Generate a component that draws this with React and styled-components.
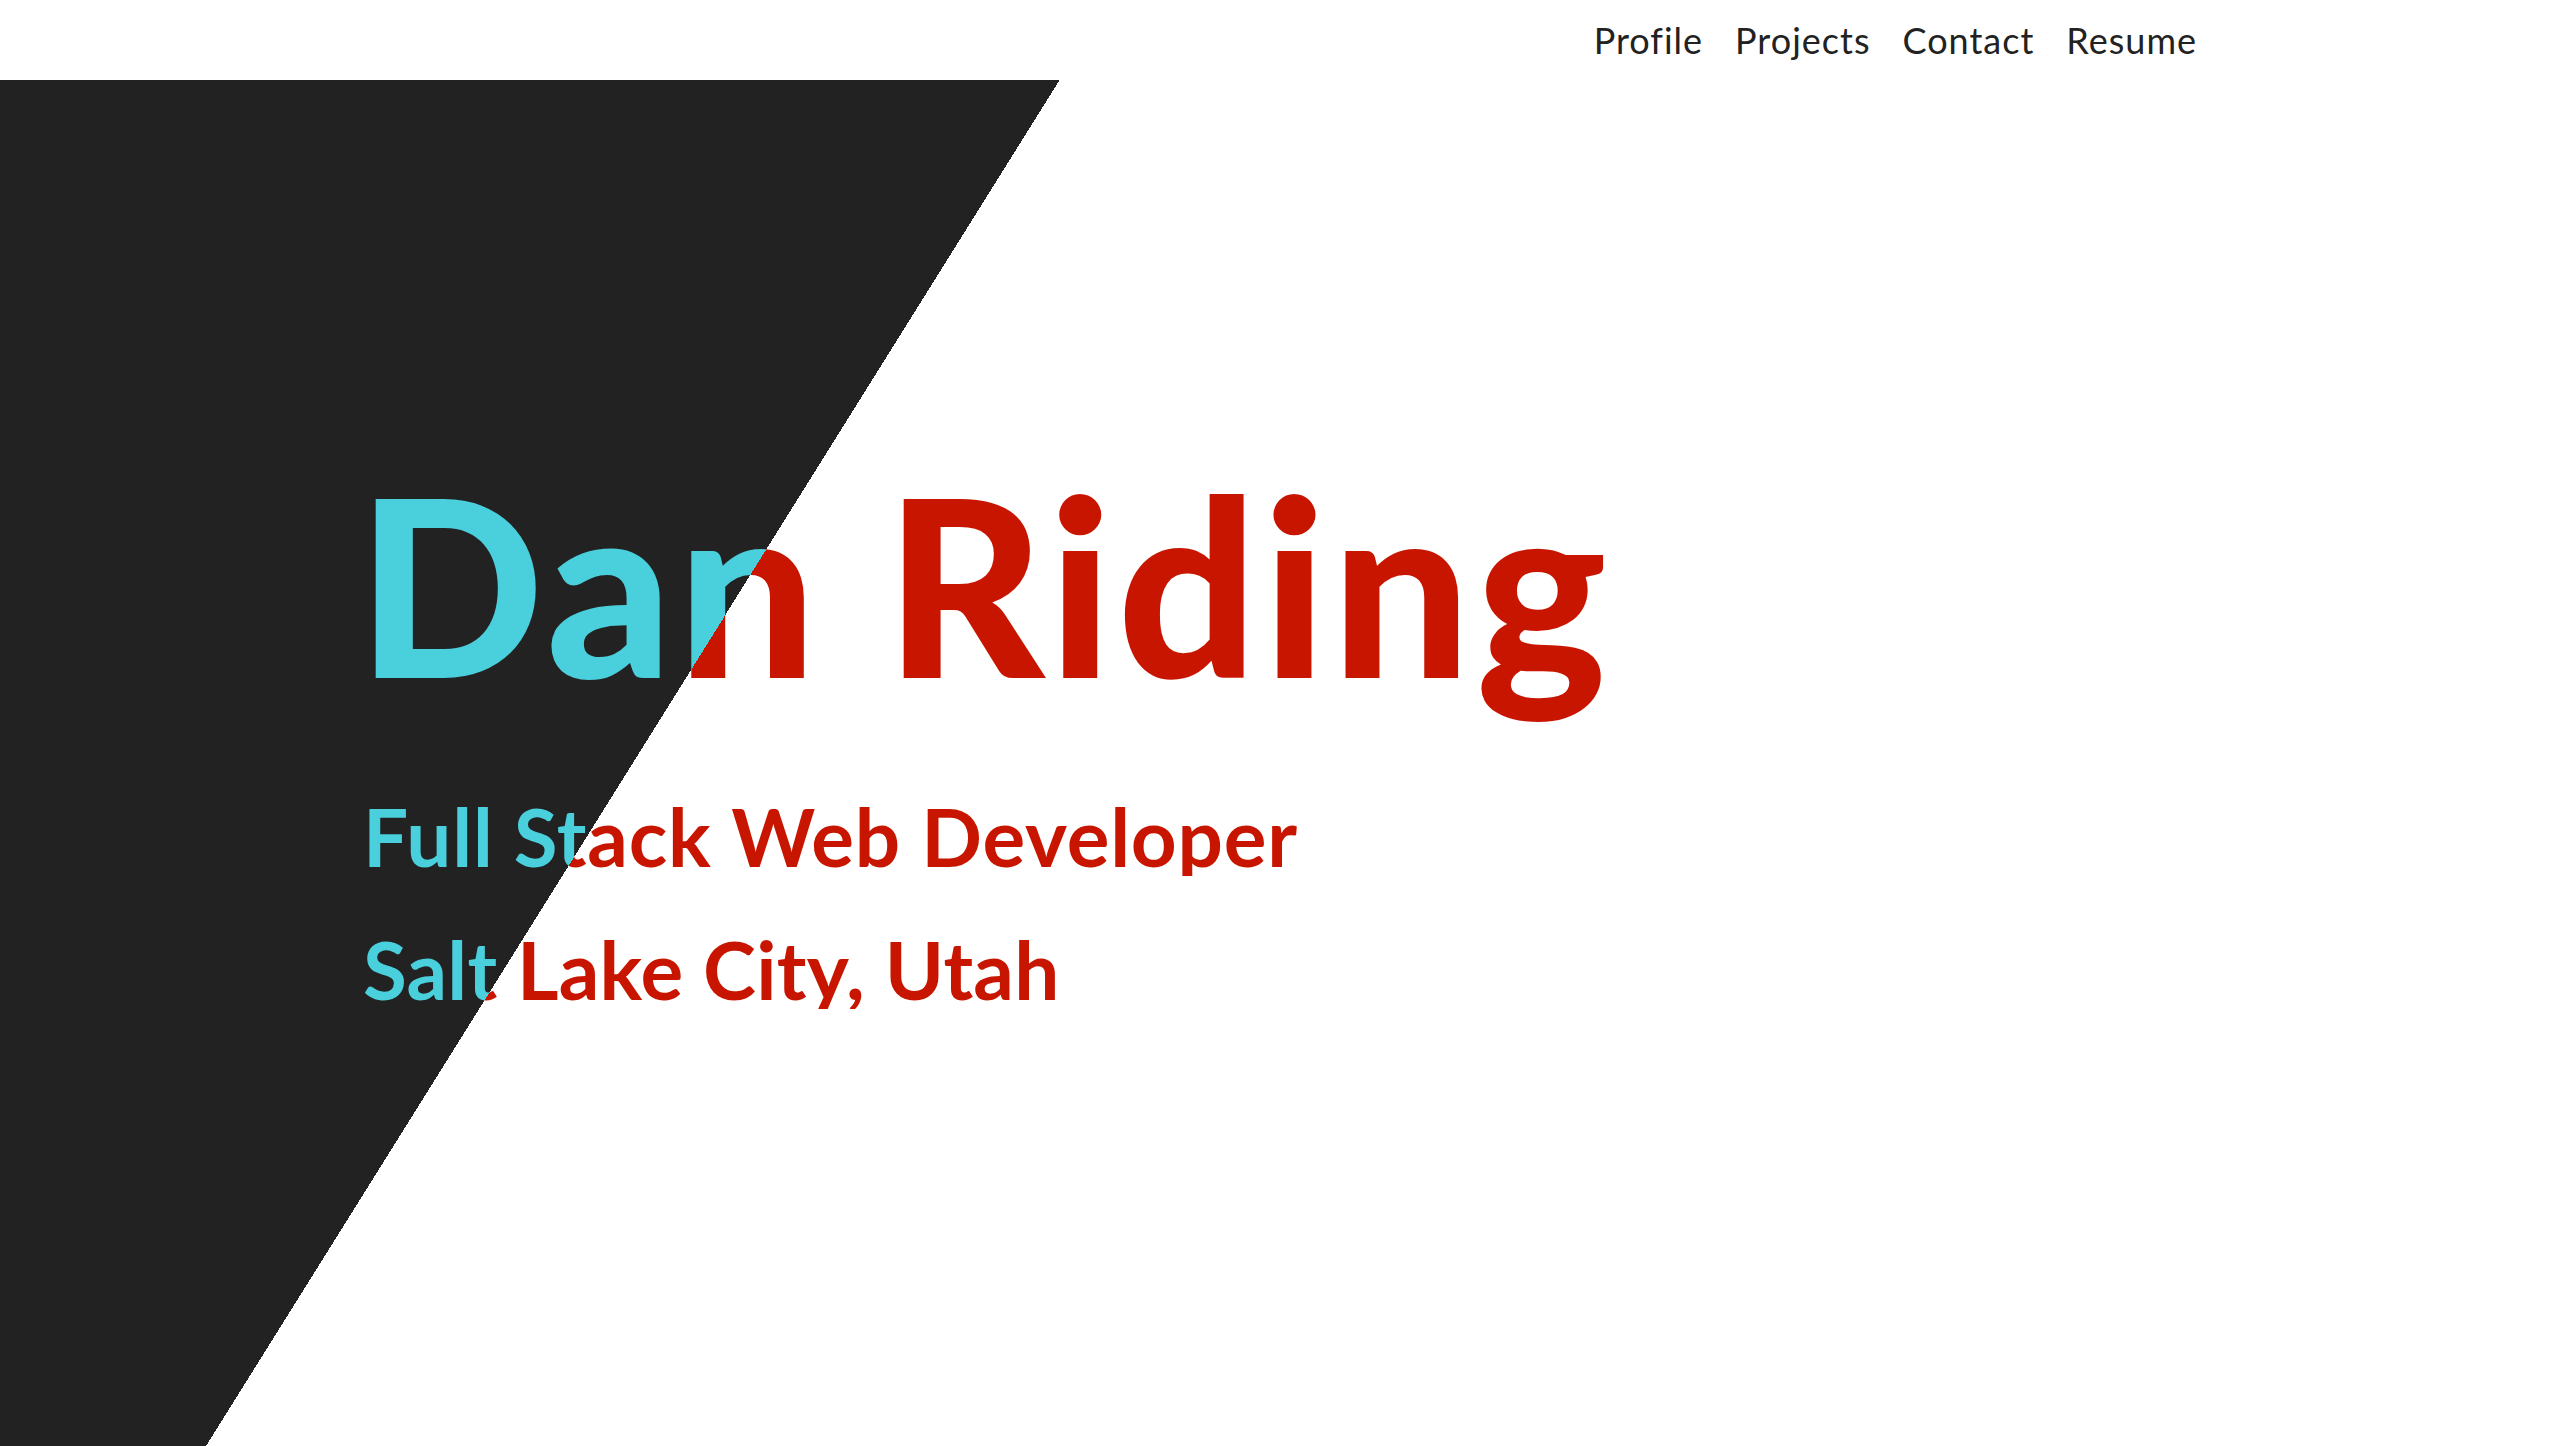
import React from "react";
import styled, { createGlobalStyle } from "styled-components";

const DARK = "#222222";
const CYAN = "#4acfdc";
const RED = "#c81500";
const ANGLE = "122deg";
const STOP = "941px";

const GlobalStyle = createGlobalStyle`
  html, body {
    margin: 0;
    padding: 0;
    background: #ffffff;
    overflow: hidden;
  }
  body {
    font-family: "Lato", "Liberation Sans", sans-serif;
  }
  * { box-sizing: border-box; }
`;

const Page = styled.div`
  width: 100%;
  height: 1446px;
  display: flex;
  flex-direction: column;
`;

const NavBar = styled.header`
  height: 80px;
  flex: none;
  background: #ffffff;
`;

const Container = styled.div`
  width: 1834px;
  margin: 0 auto;
  height: 100%;
`;

const NavList = styled.nav`
  display: flex;
  justify-content: flex-end;
  align-items: center;
  gap: 32px;
  height: 100%;
  padding-right: 0;
`;

const NavLink = styled.a`
  font-family: "Lato", "Liberation Sans", sans-serif;
  font-size: 36px;
  line-height: 42px;
  letter-spacing: 1px;
  font-variant-ligatures: none;
  color: ${DARK};
  text-decoration: none;
  cursor: pointer;
`;

const Hero = styled.section`
  flex: 1;
  background: linear-gradient(${ANGLE}, ${DARK} ${STOP}, #ffffff ${STOP}) fixed;
`;

const HeroInner = styled(Container)`
  padding-top: 380px;
  display: flex;
  flex-direction: column;
  align-items: flex-start;
`;

const SplitText = styled.h1`
  margin: 0;
  line-height: 1;
  font-family: "Lato", "Liberation Sans", sans-serif;
  font-size: ${(p) => p.$size}px;
  font-weight: ${(p) => p.$weight};
  letter-spacing: ${(p) => p.$spacing || 0}px;
  margin-top: ${(p) => p.$mt || 0}px;
  margin-left: ${(p) => p.$ml || 0}px;
  padding-bottom: ${(p) => p.$pb || 0}px;
  font-variant-ligatures: none;
  background: linear-gradient(${ANGLE}, ${CYAN} ${STOP}, ${RED} ${STOP}) fixed;
  -webkit-background-clip: text;
  background-clip: text;
  color: transparent;
  -webkit-text-fill-color: transparent;
  white-space: nowrap;
`;

export default function App() {
  return (
    <>
      <GlobalStyle />
      <Page>
        <NavBar>
          <Container>
            <NavList>
              <NavLink>Profile</NavLink>
              <NavLink>Projects</NavLink>
              <NavLink>Contact</NavLink>
              <NavLink>Resume</NavLink>
            </NavList>
          </Container>
        </NavBar>
        <Hero>
          <HeroInner>
            <SplitText as="h1" $size={246} $weight={900} $spacing={5} $ml={-6} $pb={44}>
              Dan Riding
            </SplitText>
            <SplitText as="h2" $size={80} $weight={700} $spacing={0.8} $mt={46}>
              Full Stack Web Developer
            </SplitText>
            <SplitText as="h3" $size={80} $weight={700} $spacing={0.2} $mt={53}>
              Salt Lake City, Utah
            </SplitText>
          </HeroInner>
        </Hero>
      </Page>
    </>
  );
}
